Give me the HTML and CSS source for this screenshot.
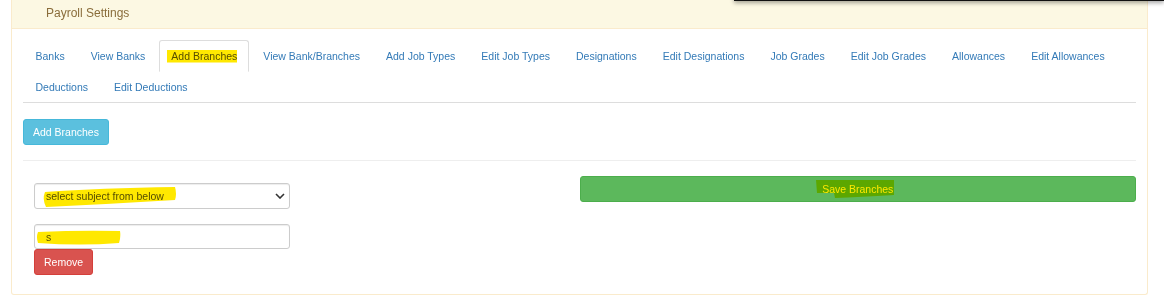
FILE: index.html
```html
<!DOCTYPE html>
<html lang="en">
<head>
    <meta charset="UTF-8">
    <meta name="viewport" content="width=device-width, initial-scale=1.0">
    <title>Payroll Settings</title>
<link rel="stylesheet" href="styles.css">
</head>
<body>
<div class="topbar"></div>

<div class="panel">
    <div class="panel-heading">Payroll Settings</div>
    <div class="panel-body">
        <ul class="nav-tabs">
            <li><a href="#">Banks</a></li>
            <li><a href="#">View Banks</a></li>
            <li class="active"><a href="#">Add Branches</a></li>
            <li><a href="#">View Bank/Branches</a></li>
            <li><a href="#">Add Job Types</a></li>
            <li><a href="#">Edit Job Types</a></li>
            <li><a href="#">Designations</a></li>
            <li><a href="#">Edit Designations</a></li>
            <li><a href="#">Job Grades</a></li>
            <li><a href="#">Edit Job Grades</a></li>
            <li><a href="#">Allowances</a></li>
            <li><a href="#">Edit Allowances</a></li>
            <li><a href="#">Deductions</a></li>
            <li><a href="#">Edit Deductions</a></li>
        </ul>

        <div class="btn-row">
            <button class="btn btn-info">Add Branches</button>
        </div>
        <hr>

        <div class="form-row">
            <div class="col-left">
                <div class="select-wrap">
                    <select class="form-control">
                        <option>select subject from below</option>
                    </select>
                    <svg class="caret" width="10" height="6" viewBox="0 0 10 6"><path d="M1 1 L5 5 L9 1" fill="none" stroke="#333" stroke-width="1.6"/></svg>
                </div>
                <input class="form-control branch-input" type="text" value="s">
                <div class="btn-row">
                    <button class="btn btn-danger">Remove</button>
                </div>
            </div>
            <div class="col-right">
                <button class="btn btn-success save-btn">Save Branches</button>
            </div>
        </div>
    </div>
</div>

<!-- marker strokes someone drew on the screenshot -->
<svg class="marker" width="1164" height="300" viewBox="0 0 1164 300">
    <rect x="167" y="50" width="70" height="12.5" fill="#ffe800"/>
    <path d="M45 192 Q100 188 175 187 Q177 194 175 200 Q110 204 46 207 Q42 199 45 192 Z" fill="#ffe800"/>
    <path d="M38 232 Q80 230 120 231 Q121 237 119 243 Q80 246 38 243 Q36 237 38 232 Z" fill="#ffe800"/>
    <path d="M816 180 L894 180 L894 195 Q860 197 835 198 L834 193 L817 193 Z" fill="#ffe800"/>
</svg>
</body>
</html>
```

FILE: styles.css
```css
body{
    margin: 0;
    background: #fff;
    font-family: "Liberation Sans", Arial, sans-serif;
    font-size: 10.5px;
    line-height: 15px;
    color: #333;
    position: relative;
    overflow: hidden;
}
.topbar{
    position: absolute;
    top: -10px;
    left: 734px;
    right: 0;
    height: 11px;
    background: #111;
    box-shadow: 0 2px 4px rgba(0,0,0,.35);
}

.panel{
    margin: 0 16px 0 11px;
    border: 1px solid #faebcc;
    border-top: none;
    border-radius: 0 0 3px 3px;
    background: #fff;
}
.panel-heading{
    height: 28px;
    line-height: 26px;
    padding-left: 34px;
    background: #fcf8e3;
    border-bottom: 1px solid #faebcc;
    color: #8a6d3b;
    font-size: 12px;
}
.panel-body{
    padding: 11px;
}

.nav-tabs{
    margin: 0;
    padding: 0;
    list-style: none;
    display: flex;
    flex-wrap: wrap;
    border-bottom: 1px solid #ddd;
}
.nav-tabs li{
    margin: 0 1.5px -1px 0;
}
.nav-tabs a{
    display: block;
    padding: 7.5px 11px 7.5px 11.5px;
    line-height: 15px;
    border: 1px solid transparent;
    border-radius: 3px 3px 0 0;
    color: #337ab7;
    text-decoration: none;
}
.nav-tabs .active a{
    color: #555;
    background: #fff;
    border-color: #ddd #ddd transparent;
}

.btn-row{
    display: flex;
}
.panel-body > .btn-row{
    margin-top: 16px;
}
.btn{
    font-family: inherit;
    font-size: 10.5px;
    line-height: 15px;
    padding: 4.5px 9px;
    border: 1px solid transparent;
    border-radius: 3px;
    color: #fff;
    cursor: pointer;
}
.btn-info{
    background: #5bc0de;
    border-color: #46b8da;
}
.btn-danger{
    background: #d9534f;
    border-color: #d43f3a;
}
.btn-success{
    background: #5cb85c;
    border-color: #4cae4c;
}

hr{
    margin: 15px 0;
    border: 0;
    border-top: 1px solid #eee;
}

.form-row{
    display: grid;
    grid-template-columns: 1fr 1fr;
}
.col-left{
    padding: 7px 0 8px 11px;
}
.form-control{
    display: block;
    box-sizing: border-box;
    width: 256px;
    height: 26px;
    padding: 0 11px;
    font-family: inherit;
    font-size: 10.5px;
    color: #555;
    background: #fff;
    border: 1px solid #ccc;
    border-radius: 3px;
    box-shadow: inset 0 1px 1px rgba(0,0,0,.075);
    outline: none;
}
.select-wrap{
    position: relative;
    width: 256px;
}
select.form-control{
    -webkit-appearance: none;
    appearance: none;
    padding-left: 11px;
}
.caret{
    position: absolute;
    right: 5px;
    top: 10px;
}
.branch-input{
    margin-top: 15px;
    height: 25px;
}
.save-btn{
    width: 100%;
    height: 26px;
    padding: 0;
}

.marker{
    position: absolute;
    left: 0;
    top: 0;
    mix-blend-mode: multiply;
    pointer-events: none;
}
```
